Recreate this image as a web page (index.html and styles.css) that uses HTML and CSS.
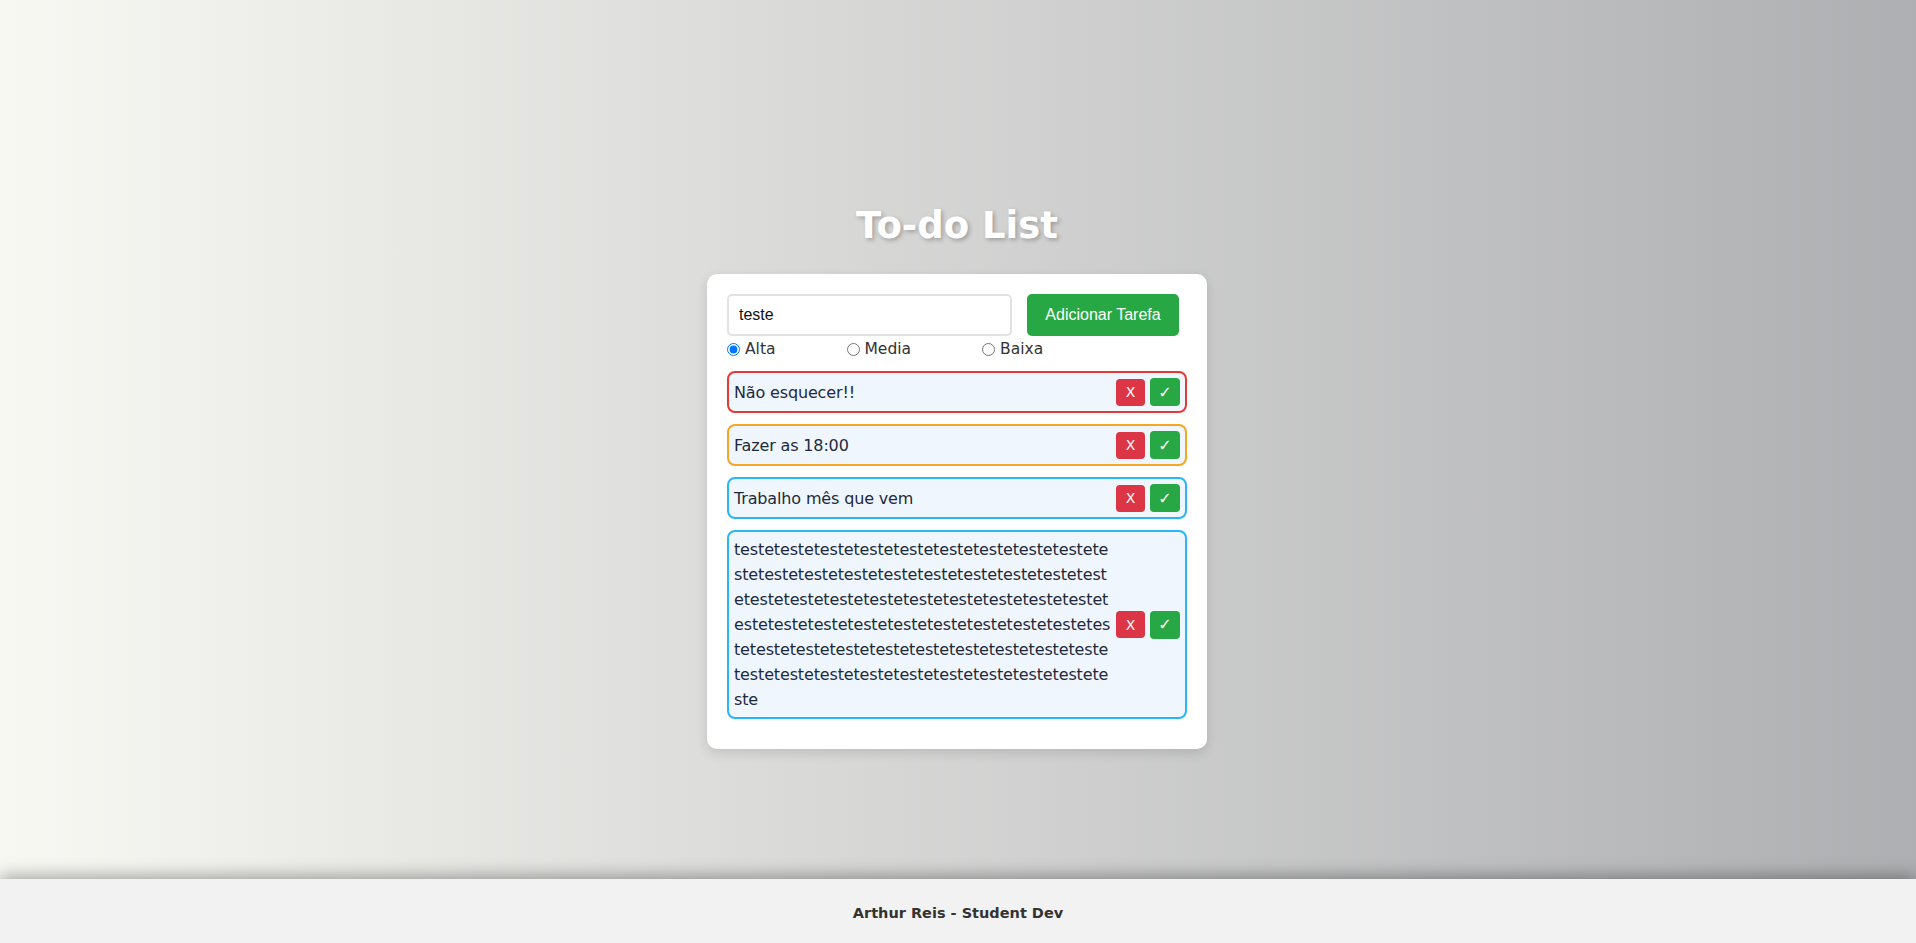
FILE: index.html
```html
<!DOCTYPE html>
<html lang="pt-BR">
<head>
<meta charset="UTF-8">
<title>To-do List</title>
<link rel="stylesheet" href="styles.css">
</head>
<body>
<main class="main">
  <h1 class="title">To-do List</h1>
  <div class="card">
    <div class="form-row">
      <input class="task-input" type="text" value="teste">
      <button class="add-btn">Adicionar Tarefa</button>
    </div>
    <div class="priority-row">
      <label class="priority"><input type="radio" name="prio" checked><span>Alta</span></label>
      <label class="priority"><input type="radio" name="prio"><span>Media</span></label>
      <label class="priority"><input type="radio" name="prio"><span>Baixa</span></label>
    </div>
    <ul class="task-list">
      <li class="task task-alta">
        <span class="task-text">Não esquecer!!</span>
        <button class="btn-del">X</button>
        <button class="btn-done">✓</button>
      </li>
      <li class="task task-media">
        <span class="task-text">Fazer as 18:00</span>
        <button class="btn-del">X</button>
        <button class="btn-done">✓</button>
      </li>
      <li class="task task-baixa">
        <span class="task-text">Trabalho mês que vem</span>
        <button class="btn-del">X</button>
        <button class="btn-done">✓</button>
      </li>
      <li class="task task-baixa">
        <span class="task-text">testetestetestetestetestetestetestetestetestetestetestetestetestetestetestetestetestetestetestetestetestetestetestetestetestetestetestetestetestetestetestetestetestetestetestetestetestetestetestetestetestetestetestetestetestetestetestetestetestetestetestetestetestetestetestetesteteste</span>
        <button class="btn-del">X</button>
        <button class="btn-done">✓</button>
      </li>
    </ul>
  </div>
</main>
<footer class="footer">
  <p class="footer-text">Arthur Reis - Student Dev</p>
</footer>
</body>
</html>
```

FILE: styles.css
```css
* {
  box-sizing: border-box;
}

html, body {
  margin: 0;
  padding: 0;
}

body {
  min-height: 100vh;
  display: flex;
  flex-direction: column;
  font-family: "DejaVu Sans", "Open Sans", sans-serif;
  background: linear-gradient(to right, #f8f8f3 0%, #aeafb2 100%);
  color: #333;
}

.main {
  flex: 1;
  display: flex;
  flex-direction: column;
  align-items: center;
  justify-content: center;
  padding-top: 74px;
  padding-right: 2px;
}

.title {
  margin: 0 0 27px;
  font-size: 37px;
  line-height: 43px;
  font-weight: 700;
  color: #fff;
  text-shadow: 2px 2px 4px rgba(0, 0, 0, 0.25);
}

.card {
  width: 500px;
  background: #fff;
  border-radius: 10px;
  padding: 20px 20px 30px;
  box-shadow: 0 4px 12px rgba(0, 0, 0, 0.12);
}

.form-row {
  display: flex;
  gap: 15px;
}

.task-input {
  width: 285px;
  height: 42px;
  padding: 0 10px;
  border: 2px solid #e2e2e2;
  border-radius: 5px;
  font-family: "Liberation Sans", Arial, sans-serif;
  font-size: 16px;
  color: #111;
  outline: none;
}

.add-btn {
  width: 152px;
  height: 42px;
  border: none;
  border-radius: 5px;
  background: #28a745;
  color: #fff;
  font-family: "Liberation Sans", Arial, sans-serif;
  font-size: 16px;
  padding: 0;
}

.priority-row {
  display: flex;
  height: 24px;
  padding-top: 2px;
  align-items: center;
  margin-bottom: 11px;
}

.priority {
  display: flex;
  align-items: center;
  margin-right: 71px;
  font-size: 15.5px;
  color: #333;
}

.priority input {
  margin: 0 5px 0 0;
  width: 13px;
  height: 13px;
}

.task-list {
  list-style: none;
  margin: 0;
  padding: 0;
  display: flex;
  flex-direction: column;
  gap: 11px;
}

.task {
  display: flex;
  align-items: center;
  gap: 5px;
  padding: 5px;
  border: 2px solid #29b6f6;
  border-radius: 8px;
  background: #eff6fe;
}

.task-alta {
  border-color: #e53935;
}

.task-media {
  border-color: #f5a623;
}

.task-baixa {
  border-color: #29b6f6;
}

.task-text {
  flex: 1;
  min-width: 0;
  font-size: 16px;
  letter-spacing: -0.15px;
  line-height: 25px;
  color: #1e2a3c;
  word-break: break-all;
}

.btn-del,
.btn-done {
  border: none;
  border-radius: 4px;
  color: #fff;
  font-family: "DejaVu Sans", sans-serif;
  font-size: 14px;
  padding: 0;
  flex: none;
}

.btn-del {
  width: 29px;
  height: 27px;
  background: #dc3545;
}

.btn-done {
  width: 30px;
  height: 28px;
  font-size: 16px;
  background: #28a745;
}

.footer {
  height: 64px;
  padding-top: 3px;
  background: #f2f2f2;
  box-shadow: 0 -3px 16px rgba(0, 0, 0, 0.35);
  display: flex;
  align-items: center;
  justify-content: center;
}

.footer-text {
  margin: 0;
  font-size: 14.5px;
  font-weight: 700;
  color: #333;
}
```
